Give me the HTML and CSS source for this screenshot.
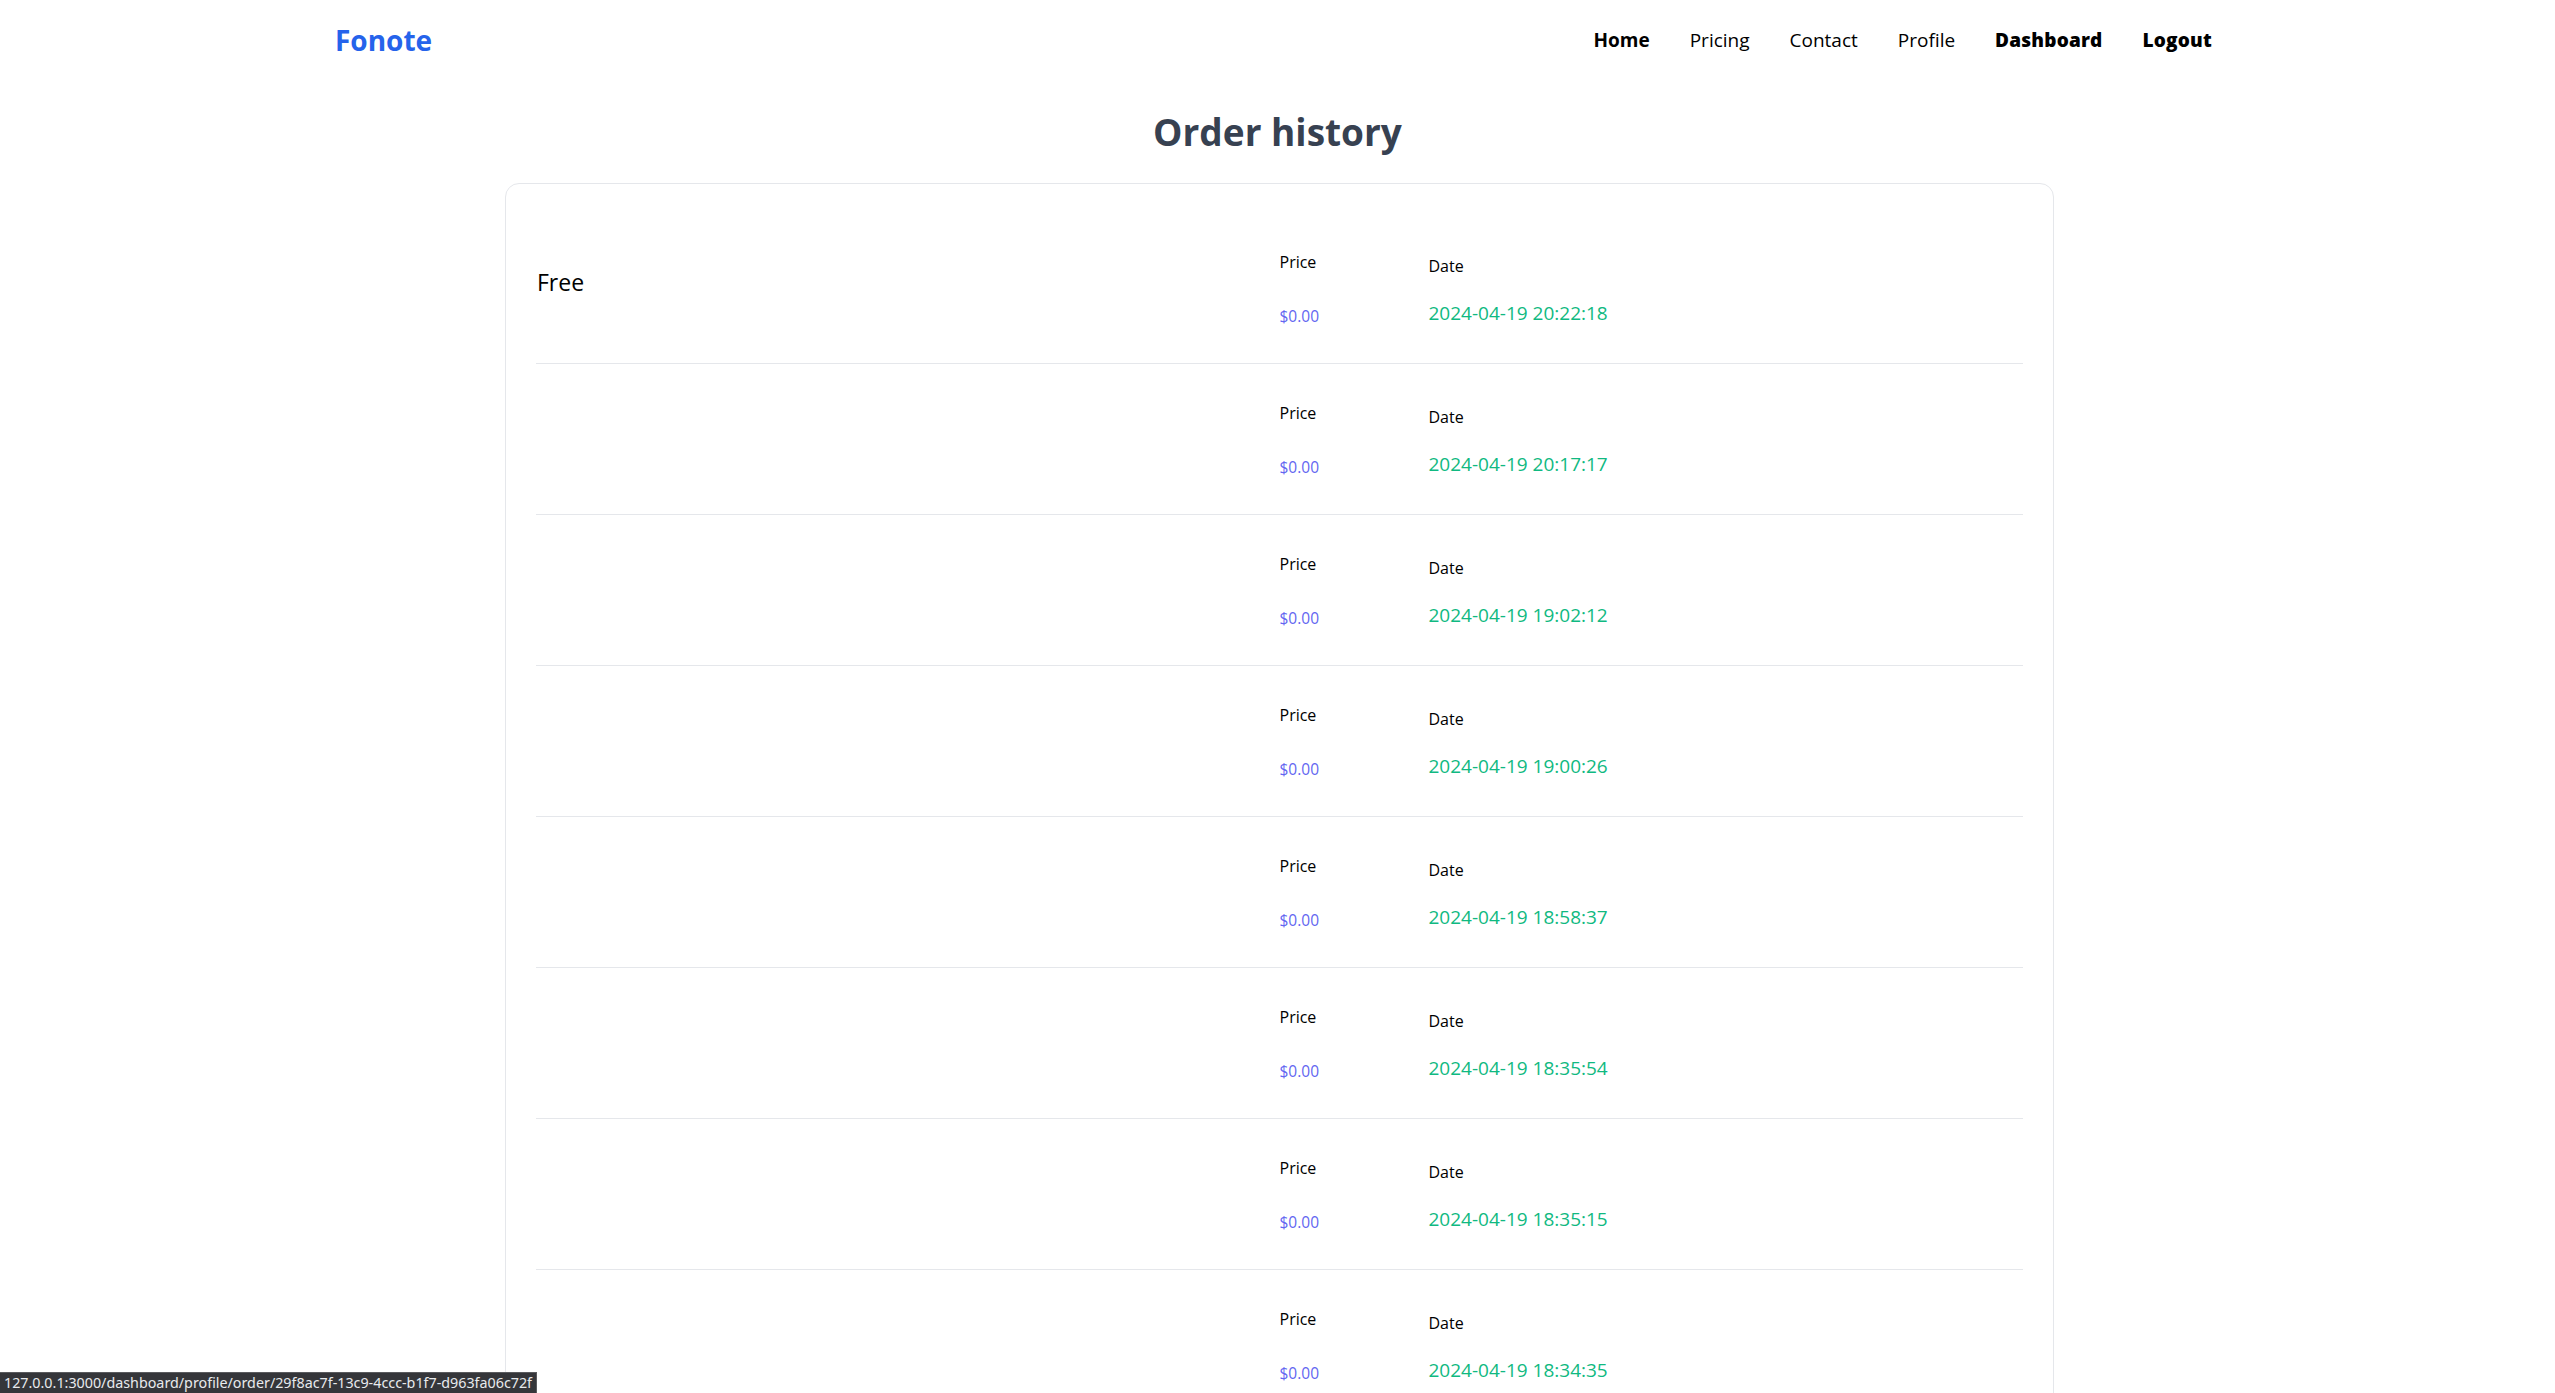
FILE: index.html
```html
<!DOCTYPE html>
<html lang="en">
<head>
<meta charset="utf-8">
<title>Order history - Fonote</title>
<link rel="stylesheet" href="styles.css">
</head>
<body>
<header class="header">
  <a class="logo" href="#">Fonote</a>
  <nav class="nav">
    <a class="nav-link bold" href="#">Home</a>
    <a class="nav-link" href="#">Pricing</a>
    <a class="nav-link" href="#">Contact</a>
    <a class="nav-link" href="#">Profile</a>
    <a class="nav-link bolder" href="#">Dashboard</a>
    <a class="nav-link bolder" href="#">Logout</a>
  </nav>
</header>
<main class="main">
  <h1 class="title">Order history</h1>
  <section class="card">
    <div class="row">
      <div class="plan">Free</div>
      <div class="info">
        <div class="col col-price"><span class="label">Price</span><span class="price">$0.00</span></div>
        <div class="col col-date"><span class="label">Date</span><span class="date">2024-04-19 20:22:18</span></div>
      </div>
    </div>
    <div class="row">
      <div class="plan"></div>
      <div class="info">
        <div class="col col-price"><span class="label">Price</span><span class="price">$0.00</span></div>
        <div class="col col-date"><span class="label">Date</span><span class="date">2024-04-19 20:17:17</span></div>
      </div>
    </div>
    <div class="row">
      <div class="plan"></div>
      <div class="info">
        <div class="col col-price"><span class="label">Price</span><span class="price">$0.00</span></div>
        <div class="col col-date"><span class="label">Date</span><span class="date">2024-04-19 19:02:12</span></div>
      </div>
    </div>
    <div class="row">
      <div class="plan"></div>
      <div class="info">
        <div class="col col-price"><span class="label">Price</span><span class="price">$0.00</span></div>
        <div class="col col-date"><span class="label">Date</span><span class="date">2024-04-19 19:00:26</span></div>
      </div>
    </div>
    <div class="row">
      <div class="plan"></div>
      <div class="info">
        <div class="col col-price"><span class="label">Price</span><span class="price">$0.00</span></div>
        <div class="col col-date"><span class="label">Date</span><span class="date">2024-04-19 18:58:37</span></div>
      </div>
    </div>
    <div class="row">
      <div class="plan"></div>
      <div class="info">
        <div class="col col-price"><span class="label">Price</span><span class="price">$0.00</span></div>
        <div class="col col-date"><span class="label">Date</span><span class="date">2024-04-19 18:35:54</span></div>
      </div>
    </div>
    <div class="row">
      <div class="plan"></div>
      <div class="info">
        <div class="col col-price"><span class="label">Price</span><span class="price">$0.00</span></div>
        <div class="col col-date"><span class="label">Date</span><span class="date">2024-04-19 18:35:15</span></div>
      </div>
    </div>
    <div class="row">
      <div class="plan"></div>
      <div class="info">
        <div class="col col-price"><span class="label">Price</span><span class="price">$0.00</span></div>
        <div class="col col-date"><span class="label">Date</span><span class="date">2024-04-19 18:34:35</span></div>
      </div>
    </div>
  </section>
</main>
<div class="status">127.0.0.1:3000/dashboard/profile/order/29f8ac7f-13c9-4ccc-b1f7-d963fa06c72f</div>
</body>
</html>
```

FILE: styles.css
```css
html, body {
  margin: 0;
  padding: 0;
  background: #ffffff;
}
html {
  scrollbar-width: none;
}
body {
  font-family: "Open Sans", "Noto Sans", sans-serif;
  color: #000000;
}
a {
  text-decoration: none;
  color: inherit;
}

.header {
  height: 80px;
  display: flex;
  align-items: center;
  justify-content: space-between;
  padding: 0 343px 0 335px;
}
.logo {
  font-size: 28px;
  font-weight: 700;
  color: #2563eb;
}
.nav {
  display: flex;
  align-items: center;
  gap: 40px;
}
.nav-link {
  font-size: 19px;
  font-weight: 400;
  color: #000;
}
.nav-link.bold { font-weight: 700; }
.nav-link.bolder { font-weight: 800; letter-spacing: 0.2px; }

.title {
  margin: 28px 0 27px;
  text-align: center;
  font-size: 37px;
  line-height: 48px;
  font-weight: 700;
  color: #374151;
}

.card {
  margin: 0 501px 0 505px;
  border: 1px solid #e5e7eb;
  border-radius: 14px;
  padding: 29px 30px;
}

.row {
  display: grid;
  grid-template-columns: 1fr 1fr;
  height: 150px;
  border-bottom: 1px solid #e5e7eb;
}
.plan {
  font-size: 23px;
  line-height: 32px;
  padding-top: 53px;
  padding-left: 1px;
}
.info {
  display: flex;
  align-items: center;
  padding-top: 2px;
}
.col {
  display: flex;
  flex-direction: column;
}
.col-price {
  width: 149px;
  gap: 30px;
}
.col-date {
  gap: 21px;
}
.label {
  font-size: 16px;
  line-height: 24px;
  color: #000;
}
.col-date .label {
  padding-top: 3px;
}
.price {
  font-size: 15.5px;
  line-height: 24px;
  color: #6366f1;
}
.date {
  font-size: 19px;
  line-height: 28px;
  color: #10b981;
}

.status {
  position: fixed;
  left: 0;
  bottom: 0;
  height: 20px;
  padding: 0 4px;
  background: #35363a;
  border-top: 1px solid #5a5b5e;
  border-right: 1px solid #5a5b5e;
  color: #e8eaed;
  font-family: "Noto Sans", "Open Sans", sans-serif;
  font-size: 14.3px;
  line-height: 20px;
  white-space: nowrap;
}
```
